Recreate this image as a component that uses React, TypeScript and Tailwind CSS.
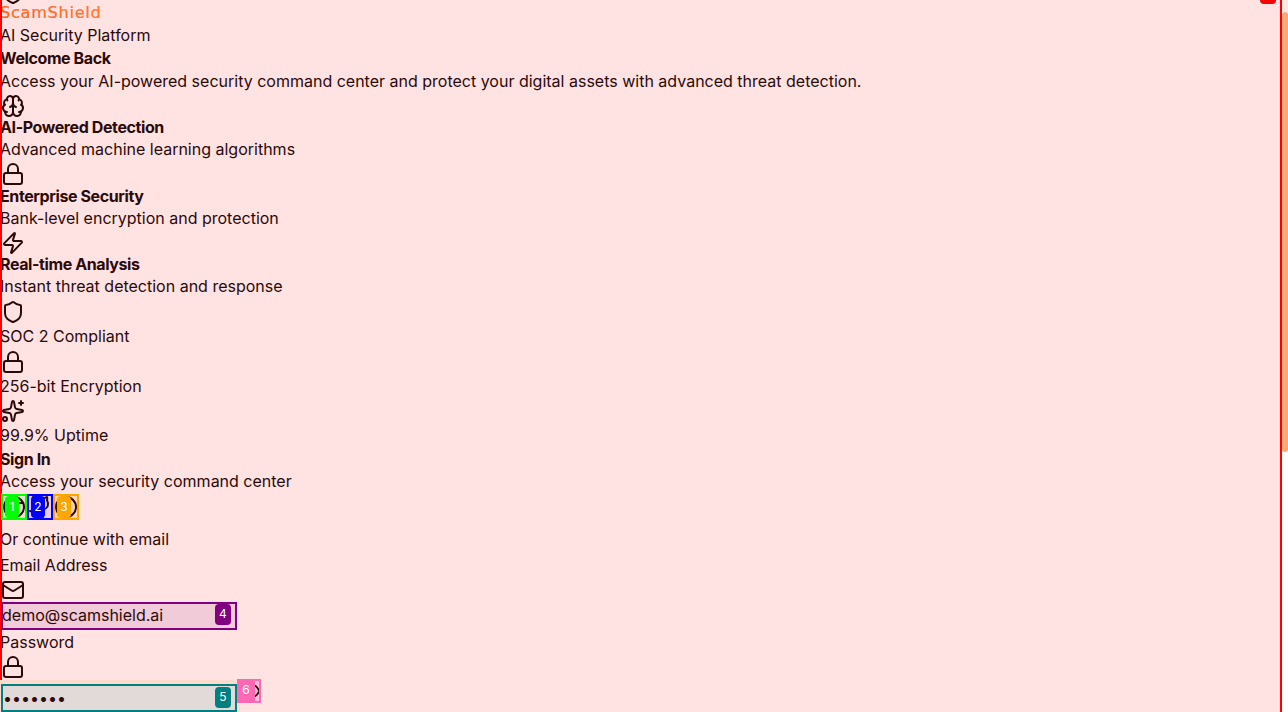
import { useEffect, useRef } from 'react';
import { Brain, Chrome, Circle, Eye, Github, Lock, Mail, Shield, Sparkles, Zap } from 'lucide-react';
import type { LucideIcon } from 'lucide-react';

const features = [
  { icon: Brain, title: 'AI-Powered Detection', text: 'Advanced machine learning algorithms' },
  { icon: Lock, title: 'Enterprise Security', text: 'Bank-level encryption and protection' },
  { icon: Zap, title: 'Real-time Analysis', text: 'Instant threat detection and response' },
];

const badges = [
  { icon: Shield, text: 'SOC 2 Compliant' },
  { icon: Lock, text: '256-bit Encryption' },
  { icon: Sparkles, text: '99.9% Uptime' },
];

export default function App() {
  const scroller = useRef<HTMLDivElement>(null);

  // the shot was taken a little way down the page
  useEffect(() => {
    if (scroller.current) scroller.current.scrollTop = 19;
  }, []);

  return (
    <div className="flex h-screen overflow-hidden bg-white font-['Inter',sans-serif] text-[16px] leading-[22.4px] text-[#2b0a0a]">
      <div ref={scroller} className="h-full w-[1282px] shrink-0 overflow-y-scroll">
        <div className="relative min-h-[1152px] bg-[#ffe2e2] outline-2 -outline-offset-2 outline-[#ff0000]">
          <div className="absolute right-[6px] top-0 h-[23px] w-[16px] rounded bg-[#ff0000]" />

          {/* Brand */}
          <Shield className="ml-[1px] block h-6 w-6" />
          <div className="w-fit bg-gradient-to-r from-[#ff5f1f] to-[#ff7f35] bg-clip-text font-['DejaVu_Sans',sans-serif] text-[16px] leading-[16px] tracking-[0.8px] text-transparent [-webkit-text-stroke:0.2px_#ff6a2c]">ScamShield</div>
          <p className="mt-[3px]">AI Security Platform</p>
          <h2 className="mt-[0.6px] font-bold tracking-[-0.4px]">Welcome Back</h2>
          <p className="mt-[0.4px]">Access your AI-powered security command center and protect your digital assets with advanced threat detection.</p>

          {/* Features */}
          {features.map(({ icon: Icon, title, text }) => (
            <div key={title} className="leading-[22.25px]">
              <Icon className="mt-[1.5px] -mb-[1.5px] ml-[1px] block h-6 w-6" strokeWidth={2} />
              <h3 className="font-bold tracking-[-0.4px]">{title}</h3>
              <p>{text}</p>
            </div>
          ))}

          {/* Trust badges */}
          <div className="mt-[2px]">
            {badges.map(({ icon: Icon, text }) => (
              <div key={text} className="pt-[0.5px] leading-[25px]">
                <Icon className="ml-[1px] block h-6 w-6" strokeWidth={2} />
                <p>{text}</p>
              </div>
            ))}
          </div>

          {/* Sign in */}
          <h2 className="-mb-[1px] font-bold tracking-[-0.4px]">Sign In</h2>
          <p>Access your security command center</p>
          <div className="mt-[2px] ml-[1px] flex">
            <SocialButton n={1} icon={Chrome} border="border-[#00ff00]" badge="bg-[#00ff00]" tint="bg-[#00ff00]/10" />
            <SocialButton n={2} icon={Github} border="border-[#0000ff]" badge="bg-[#0000ff]" tint="bg-[#0000ff]/10" />
            <SocialButton n={3} icon={Circle} border="border-[#ffa500]" badge="bg-[#ffa500]" tint="bg-[#ffa500]/20" />
          </div>
          <p className="mt-[8px]">Or continue with email</p>
          <label className="mt-[4px] block">Email Address</label>
          <Mail className="mt-[1px] ml-[1px] block h-6 w-6" strokeWidth={2} />
          <div className="relative ml-[1px] w-[236px]">
            <input
              readOnly
              type="email"
              value="demo@scamshield.ai"
              className="block h-[28px] w-full border-2 border-[#800080] bg-[#800080]/10 pb-[1px] indent-[-1px] outline-none"
            />
            <span className="absolute right-[6px] top-[2px] flex h-[21px] w-[16px] items-center justify-center rounded bg-[#800080] text-[12px] text-white">4</span>
          </div>
          <label className="mt-[1px] block">Password</label>
          <Lock className="mt-[2px] ml-[1px] block h-6 w-6" strokeWidth={2} />
          <div className="relative mt-[1px] w-[240px] bg-[#ffdacd] pt-[3.4px]">
            <div className="relative ml-[1px] w-[236px]">
              <input
                readOnly
                type="password"
                value="1234567"
                className="block h-[28px] w-full border-2 border-[#008080] bg-[#e2dad8] outline-none"
              />
              <span className="absolute right-[6px] top-[3px] flex h-[21px] w-[16px] items-center justify-center rounded bg-[#008080] text-[12px] text-white">5</span>
            </div>
            <div className="absolute left-[237px] top-[-1px] h-[24px] w-[24px] overflow-hidden border-2 border-[#ff69b4] bg-[#ff69b4]/30">
              <Eye className="-mt-[1px] h-[22px] w-[22px]" strokeWidth={2} />
              <span className="absolute left-[-2px] top-[-2px] flex h-[22px] w-[18px] items-center justify-center bg-[#ff69b4] text-[12px] text-white">6</span>
            </div>
          </div>
        </div>
      </div>

      {/* Scrollbar */}
      <div className="h-full w-[6px] shrink-0">
        <div className="h-[12px] bg-[#ffe9e4]" />
        <div className="h-[440px] rounded-[3px] bg-[#ffa873]" />
      </div>
    </div>
  );
}

function SocialButton({ n, icon: Icon, border, badge, tint }: { n: number; icon: LucideIcon; border: string; badge: string; tint: string }) {
  return (
    <div className={`relative flex h-[26px] w-[26px] items-center justify-center overflow-hidden border-2 ${border} ${tint}`}>
      <Icon className="h-6 w-6 shrink-0" strokeWidth={2} />
      <span className={`absolute left-[2px] top-0 flex h-[22px] w-[14px] items-center justify-center rounded text-[12px] text-white ${badge}`}>{n}</span>
    </div>
  );
}
